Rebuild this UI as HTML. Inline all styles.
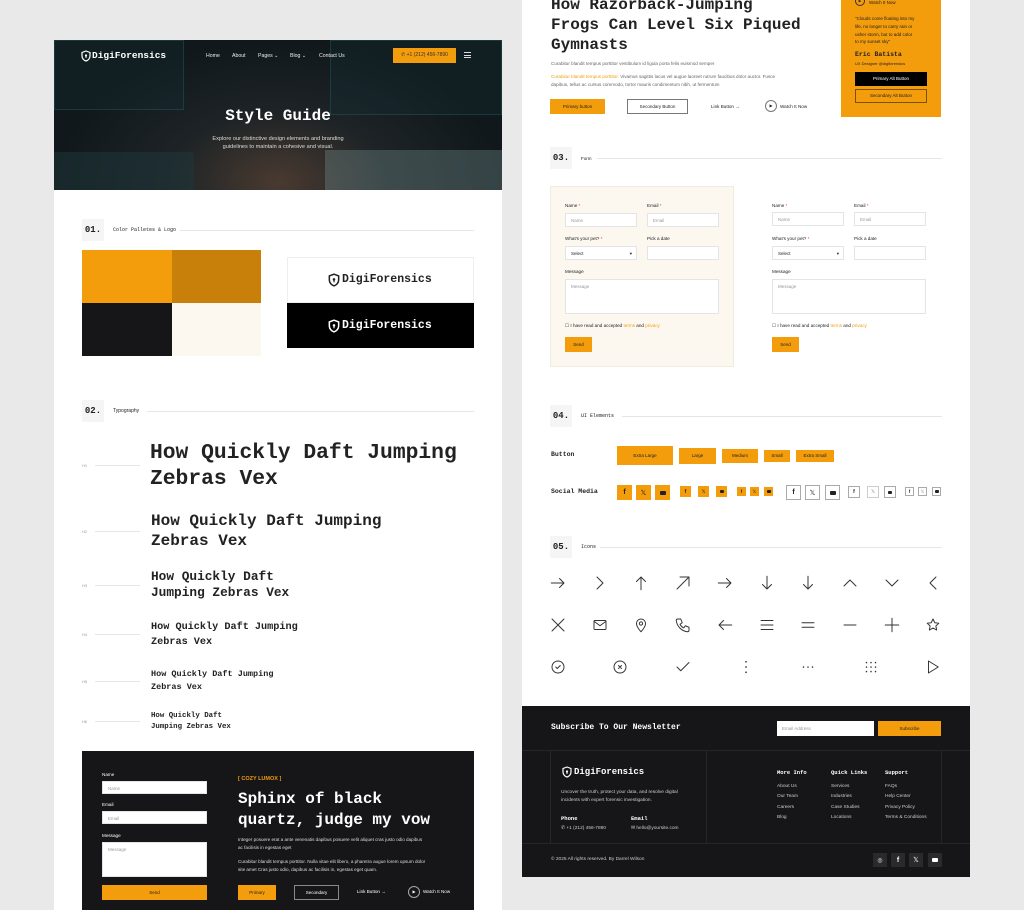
<!DOCTYPE html>
<html><head><meta charset="utf-8"><style>
*{margin:0;padding:0;box-sizing:border-box}
body{width:1024px;height:910px;background:#e9e9e9;position:relative;overflow:hidden;font-family:"Liberation Sans",sans-serif;color:#222}
.a{position:absolute;white-space:nowrap}
.m{font-family:"Liberation Mono",monospace;font-weight:bold}
.pg{position:absolute;background:#fff}
.or{background:#f39c0c}
.in{position:absolute;background:#fff;border:1px solid #e4e4e4;font-size:4.5px;color:#999;padding:4px 5px}
.lbl{position:absolute;font-size:4.6px;color:#222}
.lbl b{color:#e33;font-weight:normal}
.sh{position:absolute;width:22px;height:22px;background:#f5f5f5;font-family:"Liberation Mono",monospace;font-weight:bold;font-size:9px;line-height:22px;text-align:center;color:#222}
.hl{position:absolute;height:1px;background:#e6e6e6}
.btn{position:absolute;font-size:4.5px;text-align:center;color:#222}
.ic{position:absolute;width:18px;height:18px}
.ic svg{width:18px;height:18px;fill:none;stroke:#333;stroke-width:1.3;stroke-linecap:round;stroke-linejoin:round}
.sq{position:absolute;display:flex;align-items:center;justify-content:center}
.sq i{display:block;background:#222;border-radius:1px}
.fl{position:absolute;font-size:4.8px;color:#ccc}
</style></head><body>

<!-- LEFT PAGE -->
<div class="pg" style="left:54px;top:40px;width:448px;height:870px"></div>
<!-- hero -->
<div class="a" style="left:54px;top:40px;width:448px;height:150px;background:radial-gradient(ellipse at 50% 95%,#4a3a30 0%,#1d2326 35%,#11181b 70%),#15191b"></div>
<div class="a" style="left:54px;top:40px;width:130px;height:70px;border:1px solid rgba(40,110,110,.35);background:rgba(20,50,55,.3)"></div>
<div class="a" style="left:330px;top:40px;width:172px;height:75px;border:1px solid rgba(40,110,110,.35);background:rgba(20,50,55,.3)"></div>
<div class="a" style="left:325px;top:150px;width:177px;height:40px;background:rgba(120,150,150,.35)"></div>
<div class="a" style="left:54px;top:152px;width:140px;height:38px;background:rgba(30,55,60,.5)"></div>
<svg class="a" style="left:80px;top:50px" width="12" height="12" viewBox="0 0 24 24"><path d="M12 2l8 3v7c0 5-4 9-8 10-4-1-8-5-8-10V5z" fill="none" stroke="#fff" stroke-width="2.4"/><circle cx="12" cy="11" r="2.2" fill="#fff"/><path d="M12 12v4" stroke="#fff" stroke-width="2"/></svg>
<div class="a m" style="left:92px;top:50px;font-size:9.5px;color:#fff">DigiForensics</div>
<div class="a" style="left:206px;top:53px;font-size:5.2px;color:#eee">Home</div>
<div class="a" style="left:232px;top:53px;font-size:5.2px;color:#eee">About</div>
<div class="a" style="left:258px;top:53px;font-size:5.2px;color:#eee">Pages ⌄</div>
<div class="a" style="left:290px;top:53px;font-size:5.2px;color:#eee">Blog ⌄</div>
<div class="a" style="left:319px;top:53px;font-size:5.2px;color:#eee">Contact Us</div>
<div class="a or" style="left:393px;top:48px;width:63px;height:15px;font-size:5px;line-height:15px;text-align:center;color:#333">✆ +1 (212) 456-7890</div>
<div class="a" style="left:464px;top:52px;width:7px;height:6px;border-top:1px solid #ddd;border-bottom:1px solid #ddd"><div style="margin-top:1.5px;height:1px;background:#ddd"></div></div>
<div class="a m" style="left:54px;width:448px;top:107px;font-size:16px;color:#fff;text-align:center">Style Guide</div>
<div class="a" style="left:54px;width:448px;top:135px;font-size:5.6px;color:#ddd;text-align:center;line-height:8px">Explore our distinctive design elements and branding<br>guidelines to maintain a cohesive and visual.</div>

<!-- 01 -->
<div class="sh" style="left:82px;top:219px">01.</div>
<div class="a m" style="left:113px;top:227px;font-size:5px;font-weight:normal">Color Palletes &amp; Logo</div>
<div class="hl" style="left:180px;width:294px;top:230px"></div>
<div class="a" style="left:82px;top:250px;width:90px;height:53px;background:#f39c0c"></div>
<div class="a" style="left:172px;top:250px;width:89px;height:53px;background:#c8800a"></div>
<div class="a" style="left:82px;top:303px;width:90px;height:53px;background:#161618"></div>
<div class="a" style="left:172px;top:303px;width:89px;height:53px;background:#fcf8f0"></div>
<div class="a" style="left:287px;top:257px;width:187px;height:46px;border:1px solid #eee"></div>
<div class="a" style="left:287px;top:303px;width:187px;height:45px;background:#000"></div>
<svg class="a" style="left:327px;top:273px" width="14" height="14" viewBox="0 0 24 24"><path d="M12 2l8 3v7c0 5-4 9-8 10-4-1-8-5-8-10V5z" fill="none" stroke="#222" stroke-width="2.6"/><circle cx="12" cy="11" r="2.2" fill="#222"/><path d="M12 12v4" stroke="#222" stroke-width="2"/></svg>
<div class="a m" style="left:342px;top:273px;font-size:11.5px;color:#222">DigiForensics</div>
<svg class="a" style="left:327px;top:319px" width="14" height="14" viewBox="0 0 24 24"><path d="M12 2l8 3v7c0 5-4 9-8 10-4-1-8-5-8-10V5z" fill="none" stroke="#fff" stroke-width="2.6"/><circle cx="12" cy="11" r="2.2" fill="#fff"/><path d="M12 12v4" stroke="#fff" stroke-width="2"/></svg>
<div class="a m" style="left:342px;top:319px;font-size:11.5px;color:#fff">DigiForensics</div>

<!-- 02 -->
<div class="sh" style="left:82px;top:400px">02.</div>
<div class="a" style="left:113px;top:408px;font-size:5px">Typography</div>
<div class="hl" style="left:147px;width:327px;top:411px"></div>

<div class="a" style="left:82px;top:463px;font-size:4px;color:#999">H1</div><div class="hl" style="left:95px;width:45px;top:465px"></div>
<div class="a m" style="left:150px;top:440px;font-size:21.3px;line-height:26px;color:#222">How Quickly Daft Jumping<br>Zebras Vex</div>
<div class="a" style="left:82px;top:529px;font-size:4px;color:#999">H2</div><div class="hl" style="left:95px;width:45px;top:531px"></div>
<div class="a m" style="left:151px;top:511px;font-size:16px;line-height:20px;color:#222">How Quickly Daft Jumping<br>Zebras Vex</div>
<div class="a" style="left:82px;top:583px;font-size:4px;color:#999">H3</div><div class="hl" style="left:95px;width:45px;top:585px"></div>
<div class="a m" style="left:151px;top:569px;font-size:12.8px;line-height:16px;color:#222">How Quickly Daft<br>Jumping Zebras Vex</div>
<div class="a" style="left:82px;top:632px;font-size:4px;color:#999">H4</div><div class="hl" style="left:95px;width:45px;top:634px"></div>
<div class="a m" style="left:151px;top:620px;font-size:10.2px;line-height:15px;color:#222">How Quickly Daft Jumping<br>Zebras Vex</div>
<div class="a" style="left:82px;top:679px;font-size:4px;color:#999">H5</div><div class="hl" style="left:95px;width:45px;top:681px"></div>
<div class="a m" style="left:151px;top:668px;font-size:8.5px;line-height:13px;color:#222">How Quickly Daft Jumping<br>Zebras Vex</div>
<div class="a" style="left:82px;top:719px;font-size:4px;color:#999">H6</div><div class="hl" style="left:95px;width:45px;top:721px"></div>
<div class="a m" style="left:151px;top:711px;font-size:7.4px;line-height:10.5px;color:#222">How Quickly Daft<br>Jumping Zebras Vex</div>

<!-- dark box -->
<div class="a" style="left:82px;top:751px;width:392px;height:159px;background:#161618"></div>
<div class="lbl" style="left:102px;top:772px;color:#fff">Name</div>
<div class="in" style="left:102px;top:781px;width:105px;height:13px">Name</div>
<div class="lbl" style="left:102px;top:802px;color:#fff">Email</div>
<div class="in" style="left:102px;top:811px;width:105px;height:13px">Email</div>
<div class="lbl" style="left:102px;top:833px;color:#fff">Message</div>
<div class="in" style="left:102px;top:842px;width:105px;height:35px">Message</div>
<div class="btn or" style="left:102px;top:885px;width:105px;height:15px;line-height:15px">Send</div>
<div class="a" style="left:238px;top:776px;font-size:5.5px;color:#f39c0c;font-weight:bold">[ COZY LUMOX ]</div>
<div class="a m" style="left:238px;top:789px;font-size:16px;line-height:21px;color:#fff">Sphinx of black<br>quartz, judge my vow</div>
<div class="a" style="left:238px;top:836px;font-size:4.6px;line-height:8px;color:#ddd">Integer posuere erat a ante venenatis dapibus posuere velit aliquet cras justo odio dapibus<br>ac facilisis in egestas eget</div>
<div class="a" style="left:238px;top:858px;font-size:4.6px;line-height:8px;color:#ddd">Curabitur blandit tempus porttitor. Nulla vitae elit libero, a pharetra augue lorem upsum dolor<br>site amet Cras justo odio, dapibus ac facilisis in, egestas eget quam.</div>
<div class="btn or" style="left:238px;top:885px;width:38px;height:15px;line-height:15px">Primary</div>
<div class="btn" style="left:294px;top:885px;width:45px;height:15px;line-height:13px;border:1px solid #888;color:#fff">Secondary</div>
<div class="a" style="left:357px;top:889px;font-size:4.6px;color:#fff">Link Button →</div>
<div class="a" style="left:408px;top:886px;width:12px;height:12px;border:1px solid #aaa;border-radius:50%;font-size:4px;color:#fff;text-align:center;line-height:10px">▶</div>
<div class="a" style="left:423px;top:889px;font-size:4.6px;color:#fff">Watch It Now</div>

<!-- RIGHT PAGE -->
<div class="pg" style="left:522px;top:0;width:448px;height:877px"></div>
<div class="a m" style="left:551px;top:-5px;font-size:16px;line-height:20px;color:#222">How Razorback-Jumping<br>Frogs Can Level Six Piqued<br>Gymnasts</div>
<div class="a" style="left:551px;top:61px;font-size:4.6px;color:#666">Curabitur blandit tempus porttitor vestibulum id ligula porta felis euismod semper</div>
<div class="a" style="left:551px;top:73px;font-size:4.6px;line-height:8px;color:#666"><span style="color:#f39c0c">Curabitur blandit tempus porttitor.</span> Vivamus sagittis lacus vel augue laoreet rutrum faucibus dolor auctor. Fusce<br>dapibus, tellus ac cursus commodo, tortor mauris condimentum nibh, ut fermentum</div>
<div class="btn or" style="left:550px;top:99px;width:55px;height:15px;line-height:15px">Primary button</div>
<div class="btn" style="left:627px;top:99px;width:61px;height:15px;line-height:13px;border:1px solid #777">Secondary Button</div>
<div class="a" style="left:711px;top:104px;font-size:4.6px">Link Button →</div>
<div class="a" style="left:765px;top:100px;width:12px;height:12px;border:1px solid #777;border-radius:50%;font-size:4px;text-align:center;line-height:10px">▶</div>
<div class="a" style="left:780px;top:104px;font-size:4.6px">Watch It Now</div>

<div class="a or" style="left:841px;top:0;width:100px;height:117px"></div>
<div class="a" style="left:855px;top:-4px;width:10px;height:10px;border:1px solid #333;border-radius:50%;font-size:3.5px;text-align:center;line-height:8px">▶</div>
<div class="a" style="left:869px;top:0;font-size:4.5px">Watch It Now</div>
<div class="a" style="left:855px;top:15px;font-size:4.5px;line-height:7.8px;color:#222">"Clouds come floating into my<br>life, no longer to carry rain or<br>usher storm, but to add color<br>to my sunset sky"</div>
<div class="a m" style="left:855px;top:51px;font-size:6.5px">Eric Batista</div>
<div class="a" style="left:855px;top:61px;font-size:4px">UX Designer @digiforensics</div>
<div class="btn" style="left:855px;top:72px;width:72px;height:14px;line-height:14px;background:#000;color:#fff">Primary Alt Button</div>
<div class="btn" style="left:855px;top:89px;width:72px;height:14px;line-height:12px;border:1px solid #7a5200">Secondary Alt Button</div>

<!-- 03 -->
<div class="sh" style="left:550px;top:147px">03.</div>
<div class="a" style="left:581px;top:156px;font-size:4.5px">Form</div>
<div class="hl" style="left:597px;width:345px;top:158px"></div>
<div class="a" style="left:550px;top:186px;width:184px;height:181px;background:#fcf8f0;border:1px solid #f1ece2"></div>
<div class="lbl" style="left:565px;top:203px">Name <b>*</b></div>
<div class="lbl" style="left:647px;top:203px">Email <b>*</b></div>
<div class="in" style="left:565px;top:213px;width:72px;height:14px">Name</div>
<div class="in" style="left:647px;top:213px;width:72px;height:14px">Email</div>
<div class="lbl" style="left:565px;top:236px">What's your pet? <b>*</b></div>
<div class="lbl" style="left:647px;top:236px">Pick a date</div>
<div class="in" style="left:565px;top:246px;width:72px;height:14px;color:#222">Select<span style="position:absolute;right:4px">▾</span></div>
<div class="in" style="left:647px;top:246px;width:72px;height:14px"></div>
<div class="lbl" style="left:565px;top:269px">Message</div>
<div class="in" style="left:565px;top:279px;width:154px;height:35px">Message</div>
<div class="lbl" style="left:565px;top:323px">☐ I have read and accepted <span style="color:#f39c0c">terms</span> and <span style="color:#f39c0c">privacy</span></div>
<div class="btn or" style="left:565px;top:337px;width:27px;height:15px;line-height:15px">Send</div>

<div class="lbl" style="left:772px;top:203px">Name <b>*</b></div>
<div class="lbl" style="left:854px;top:203px">Email <b>*</b></div>
<div class="in" style="left:772px;top:212px;width:72px;height:14px">Name</div>
<div class="in" style="left:854px;top:212px;width:72px;height:14px">Email</div>
<div class="lbl" style="left:772px;top:236px">What's your pet? <b>*</b></div>
<div class="lbl" style="left:854px;top:236px">Pick a date</div>
<div class="in" style="left:772px;top:246px;width:72px;height:14px;color:#222">Select<span style="position:absolute;right:4px">▾</span></div>
<div class="in" style="left:854px;top:246px;width:72px;height:14px"></div>
<div class="lbl" style="left:772px;top:269px">Message</div>
<div class="in" style="left:772px;top:279px;width:154px;height:35px">Message</div>
<div class="lbl" style="left:772px;top:323px">☐ I have read and accepted <span style="color:#f39c0c">terms</span> and <span style="color:#f39c0c">privacy</span></div>
<div class="btn or" style="left:772px;top:337px;width:27px;height:15px;line-height:15px">Send</div>

<!-- 04 -->
<div class="sh" style="left:550px;top:405px">04.</div>
<div class="a m" style="left:581px;top:413px;font-size:5px;font-weight:normal">UI Elements</div>
<div class="hl" style="left:622px;width:320px;top:416px"></div>
<div class="a m" style="left:551px;top:451px;font-size:6.5px">Button</div>
<div class="btn or" style="left:617px;top:446px;width:56px;height:19px;line-height:19px">Extra Large</div>
<div class="btn or" style="left:679px;top:448px;width:37px;height:16px;line-height:16px">Large</div>
<div class="btn or" style="left:722px;top:449px;width:36px;height:14px;line-height:14px">Medium</div>
<div class="btn or" style="left:764px;top:450px;width:26px;height:12px;line-height:12px">Small</div>
<div class="btn or" style="left:796px;top:450px;width:38px;height:12px;line-height:12px">Extra Small</div>
<div class="a m" style="left:551px;top:488px;font-size:6.5px">Social Media</div>

<!-- socials -->
<div class="sq or" style="left:617px;top:485px;width:15px;height:15px;color:#222;font-size:7px;font-weight:bold">f</div>
<div class="sq or" style="left:636px;top:485px;width:15px;height:15px;color:#222;font-size:7px">𝕏</div>
<div class="sq or" style="left:655px;top:485px;width:15px;height:15px"><i style="width:6px;height:4px"></i></div>
<div class="sq or" style="left:680px;top:486px;width:11px;height:11px;font-size:5px;font-weight:bold">f</div>
<div class="sq or" style="left:698px;top:486px;width:11px;height:11px;font-size:5px">𝕏</div>
<div class="sq or" style="left:716px;top:486px;width:11px;height:11px"><i style="width:4px;height:3px"></i></div>
<div class="sq or" style="left:737px;top:487px;width:9px;height:9px;font-size:4.5px;font-weight:bold">f</div>
<div class="sq or" style="left:750px;top:487px;width:9px;height:9px;font-size:4.5px">𝕏</div>
<div class="sq or" style="left:764px;top:487px;width:9px;height:9px"><i style="width:4px;height:3px"></i></div>
<div class="sq" style="left:786px;top:485px;width:15px;height:15px;border:1px solid #aaa;font-size:7px;font-weight:bold">f</div>
<div class="sq" style="left:805px;top:485px;width:15px;height:15px;border:1px solid #aaa;font-size:7px">𝕏</div>
<div class="sq" style="left:825px;top:485px;width:15px;height:15px;border:1px solid #aaa"><i style="width:6px;height:4px"></i></div>
<div class="sq" style="left:848px;top:486px;width:12px;height:12px;border:1px solid #aaa;font-size:5px;font-weight:bold">f</div>
<div class="sq" style="left:867px;top:486px;width:12px;height:12px;border:1px solid #ccc;font-size:5px;color:#888">𝕏</div>
<div class="sq" style="left:884px;top:486px;width:12px;height:12px;border:1px solid #aaa"><i style="width:4px;height:3px"></i></div>
<div class="sq" style="left:905px;top:487px;width:9px;height:9px;border:1px solid #aaa;font-size:4.5px;font-weight:bold">f</div>
<div class="sq" style="left:918px;top:487px;width:9px;height:9px;border:1px solid #aaa;font-size:4.5px;color:#888">𝕏</div>
<div class="sq" style="left:932px;top:487px;width:9px;height:9px;border:1px solid #aaa"><i style="width:4px;height:3px"></i></div>

<!-- 05 -->
<div class="sh" style="left:550px;top:536px">05.</div>
<div class="a m" style="left:581px;top:544px;font-size:5px;font-weight:normal">Icons</div>
<div class="hl" style="left:600px;width:342px;top:547px"></div>

<div class="ic" style="left:549px;top:574px"><svg viewBox="0 0 24 24"><path d="M3 12h17M14 6l6 6-6 6"/></svg></div>
<div class="ic" style="left:591px;top:574px"><svg viewBox="0 0 24 24"><path d="M8 4l8 8-8 8"/></svg></div>
<div class="ic" style="left:632px;top:574px"><svg viewBox="0 0 24 24"><path d="M12 21V4M6 10l6-6 6 6"/></svg></div>
<div class="ic" style="left:674px;top:574px"><svg viewBox="0 0 24 24"><path d="M4 20L20 4M8 4h12v12"/></svg></div>
<div class="ic" style="left:716px;top:574px"><svg viewBox="0 0 24 24"><path d="M3 12h17M14 6l6 6-6 6"/></svg></div>
<div class="ic" style="left:758px;top:574px"><svg viewBox="0 0 24 24"><path d="M12 3v17M6 14l6 6 6-6"/></svg></div>
<div class="ic" style="left:799px;top:574px"><svg viewBox="0 0 24 24"><path d="M12 3v17M6 14l6 6 6-6"/></svg></div>
<div class="ic" style="left:841px;top:574px"><svg viewBox="0 0 24 24"><path d="M4 16l8-8 8 8"/></svg></div>
<div class="ic" style="left:883px;top:574px"><svg viewBox="0 0 24 24"><path d="M4 8l8 8 8-8"/></svg></div>
<div class="ic" style="left:924px;top:574px"><svg viewBox="0 0 24 24"><path d="M16 4l-8 8 8 8"/></svg></div>

<div class="ic" style="left:549px;top:616px"><svg viewBox="0 0 24 24"><path d="M4 4l16 16M20 4L4 20"/></svg></div>
<div class="ic" style="left:591px;top:616px"><svg viewBox="0 0 24 24"><rect x="4" y="6" width="16" height="12" rx="1"/><path d="M4 7l8 6 8-6"/></svg></div>
<div class="ic" style="left:632px;top:616px"><svg viewBox="0 0 24 24"><path d="M12 21s-6-6-6-11a6 6 0 0112 0c0 5-6 11-6 11z"/><circle cx="12" cy="10" r="2.2"/></svg></div>
<div class="ic" style="left:674px;top:616px"><svg viewBox="0 0 24 24"><path d="M5 4h4l2 5-3 2a11 11 0 005 5l2-3 5 2v4a2 2 0 01-2 2A17 17 0 013 6a2 2 0 012-2z"/></svg></div>
<div class="ic" style="left:716px;top:616px"><svg viewBox="0 0 24 24"><path d="M21 12H4M10 6l-6 6 6 6"/></svg></div>
<div class="ic" style="left:758px;top:616px"><svg viewBox="0 0 24 24"><path d="M4 6h16M4 12h16M4 18h16"/></svg></div>
<div class="ic" style="left:799px;top:616px"><svg viewBox="0 0 24 24"><path d="M4 9h16M4 15h16"/></svg></div>
<div class="ic" style="left:841px;top:616px"><svg viewBox="0 0 24 24"><path d="M4 12h16"/></svg></div>
<div class="ic" style="left:883px;top:616px"><svg viewBox="0 0 24 24"><path d="M12 3v18M3 12h18"/></svg></div>
<div class="ic" style="left:924px;top:616px"><svg viewBox="0 0 24 24"><path d="M12 4l2.4 5 5.4.6-4 3.7 1.1 5.4L12 16l-4.9 2.7 1.1-5.4-4-3.7 5.4-.6z"/></svg></div>

<div class="ic" style="left:549px;top:658px"><svg viewBox="0 0 24 24"><circle cx="12" cy="12" r="8"/><path d="M9 12l2 2 4-4"/></svg></div>
<div class="ic" style="left:611px;top:658px"><svg viewBox="0 0 24 24"><circle cx="12" cy="12" r="8"/><path d="M10 10l4 4M14 10l-4 4"/></svg></div>
<div class="ic" style="left:674px;top:658px"><svg viewBox="0 0 24 24"><path d="M4 12l5 5L20 6"/></svg></div>
<div class="ic" style="left:737px;top:658px"><svg viewBox="0 0 24 24" style="stroke-width:2.2"><path d="M12 5v.1M12 12v.1M12 19v.1"/></svg></div>
<div class="ic" style="left:799px;top:658px"><svg viewBox="0 0 24 24" style="stroke-width:2"><path d="M6 12v.1M12 12v.1M18 12v.1"/></svg></div>
<div class="ic" style="left:862px;top:658px"><svg viewBox="0 0 24 24" style="stroke-width:2"><path d="M6 6v.1M12 6v.1M18 6v.1M6 12v.1M12 12v.1M18 12v.1M6 18v.1M12 18v.1M18 18v.1"/></svg></div>
<div class="ic" style="left:924px;top:658px"><svg viewBox="0 0 24 24"><path d="M6 4l13 8-13 8z"/></svg></div>

<!-- footer -->
<div class="a" style="left:522px;top:706px;width:448px;height:171px;background:#161618"></div>
<div class="a" style="left:522px;top:750px;width:448px;height:1px;background:#262628"></div>
<div class="a" style="left:522px;top:843px;width:448px;height:1px;background:#262628"></div>
<div class="a" style="left:550px;top:750px;width:1px;height:93px;background:#262628"></div>
<div class="a" style="left:706px;top:750px;width:1px;height:93px;background:#262628"></div>
<div class="a" style="left:941px;top:750px;width:1px;height:93px;background:#262628"></div>
<div class="a m" style="left:551px;top:723px;font-size:8px;color:#fff">Subscribe To Our Newsletter</div>
<div class="a" style="left:777px;top:721px;width:97px;height:15px;background:#fff;font-size:4.5px;color:#999;padding:5px 5px">Email Address</div>
<div class="btn or" style="left:878px;top:721px;width:63px;height:15px;line-height:15px">Subscribe</div>
<svg class="a" style="left:561px;top:766px" width="12" height="12" viewBox="0 0 24 24"><path d="M12 2l8 3v7c0 5-4 9-8 10-4-1-8-5-8-10V5z" fill="none" stroke="#fff" stroke-width="2.4"/><circle cx="12" cy="11" r="2.2" fill="#fff"/><path d="M12 12v4" stroke="#fff" stroke-width="2"/></svg>
<div class="a m" style="left:574px;top:767px;font-size:9px;color:#fff">DigiForensics</div>
<div class="fl" style="left:561px;top:789px;line-height:8px">Uncover the truth, protect your data, and resolve digital<br>incidents with expert forensic investigation.</div>
<div class="a m" style="left:561px;top:815px;font-size:5.5px;color:#fff">Phone</div>
<div class="a m" style="left:631px;top:815px;font-size:5.5px;color:#fff">Email</div>
<div class="fl" style="left:561px;top:826px">✆ +1 (212) 456-7890</div>
<div class="fl" style="left:631px;top:826px">✉ hello@yoursite.com</div>
<div class="a m" style="left:777px;top:769px;font-size:5.5px;color:#fff">More Info</div>
<div class="a m" style="left:831px;top:769px;font-size:5.5px;color:#fff">Quick Links</div>
<div class="a m" style="left:885px;top:769px;font-size:5.5px;color:#fff">Support</div>
<div class="fl" style="left:777px;top:782px;line-height:10.3px">About Us<br>Our Team<br>Careers<br>Blog</div>
<div class="fl" style="left:831px;top:782px;line-height:10.3px">Services<br>Industries<br>Case Studies<br>Locations</div>
<div class="fl" style="left:885px;top:782px;line-height:10.3px">FAQs<br>Help Center<br>Privacy Policy<br>Terms &amp; Conditions</div>
<div class="fl" style="left:551px;top:857px">© 2025 All rights reserved. By Darrel Wilson</div>
<div class="sq" style="left:873px;top:853px;width:14px;height:14px;background:#2a2a2c;color:#fff;font-size:6px">◎</div>
<div class="sq" style="left:891px;top:853px;width:14px;height:14px;background:#2a2a2c;color:#fff;font-size:7px;font-weight:bold">f</div>
<div class="sq" style="left:909px;top:853px;width:14px;height:14px;background:#2a2a2c;color:#fff;font-size:7px">𝕏</div>
<div class="sq" style="left:928px;top:853px;width:14px;height:14px;background:#2a2a2c"><i style="width:6px;height:4px;background:#fff"></i></div>
</body></html>
